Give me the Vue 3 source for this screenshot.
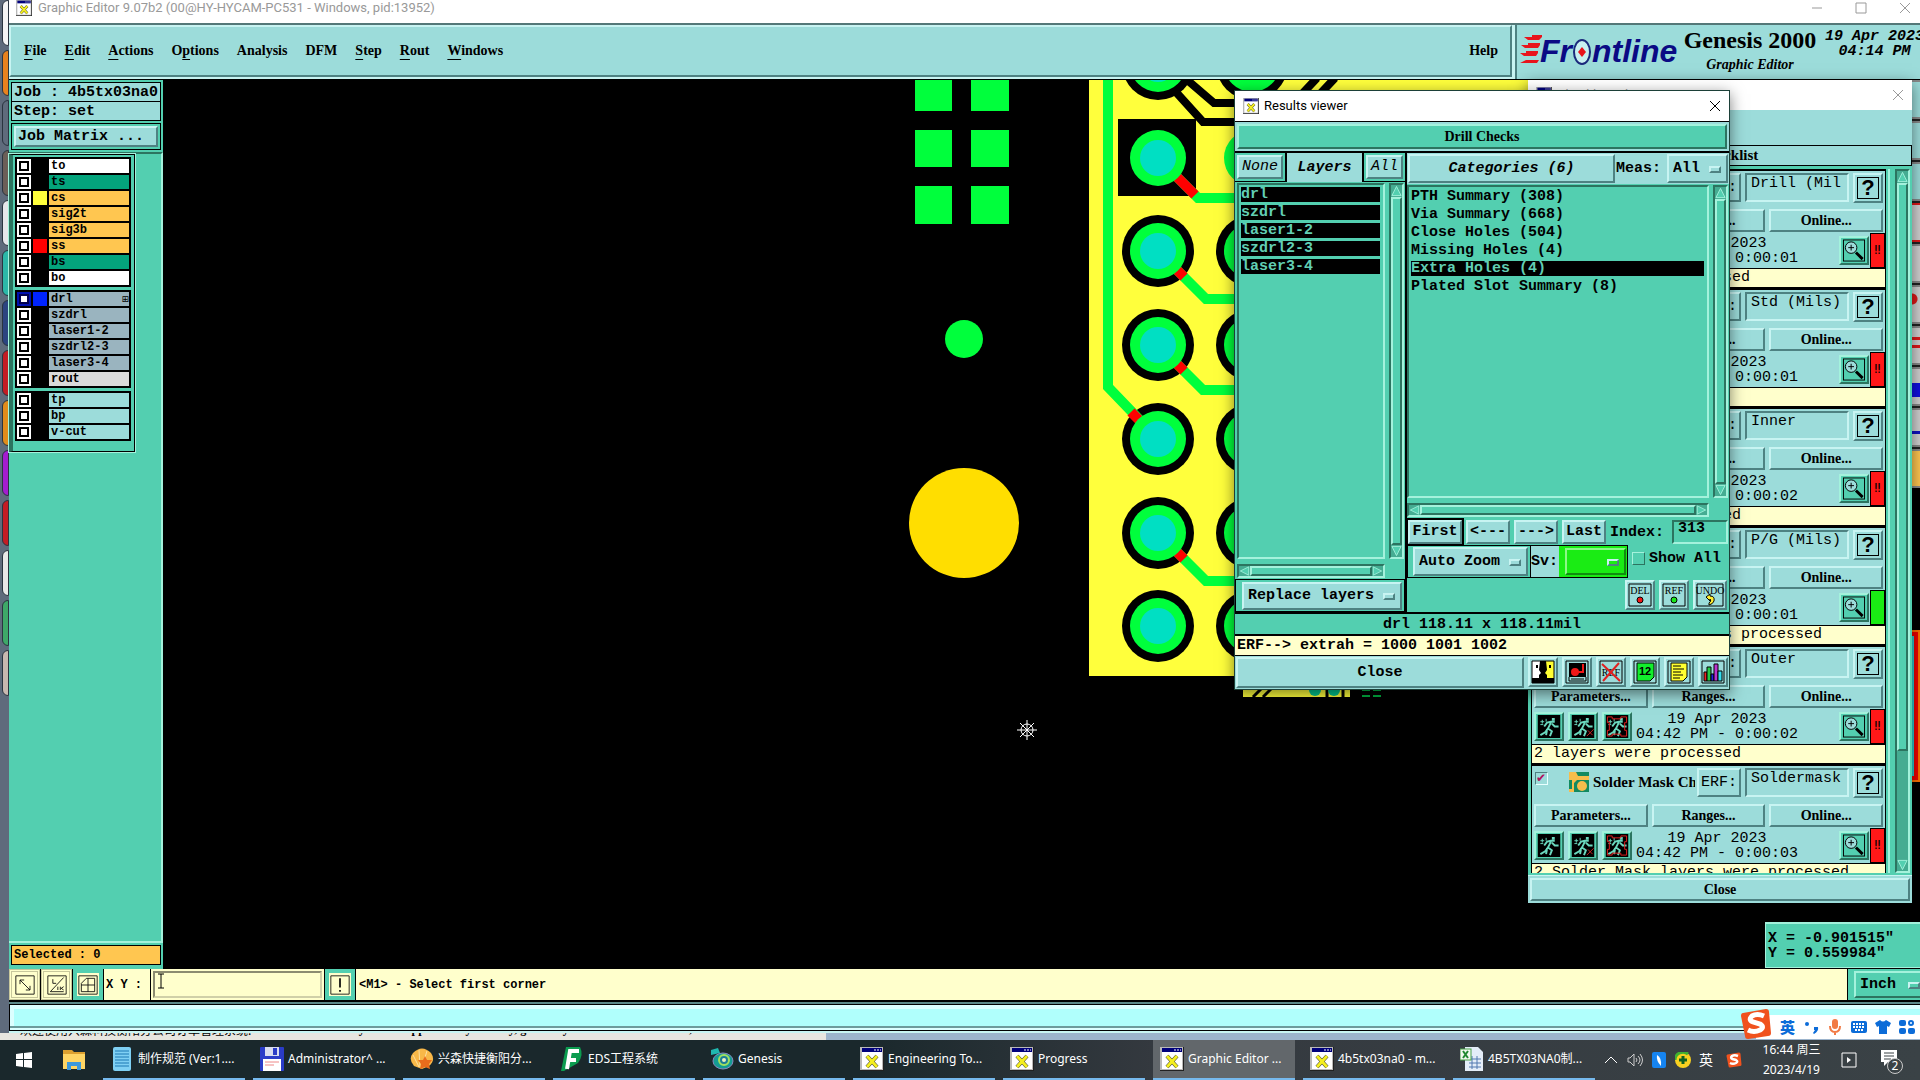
<template>
  <div class="desktop">
    <svg class="symbols" width="0" height="0" aria-hidden="true">
      <symbol id="xwin" viewBox="0 0 24 24">
        <rect width="24" height="24" fill="#222" />
        <path d="M0 0h23v23H0z" fill="#b8b8b8" />
        <rect x="2" y="2" width="20" height="20" fill="#fff" />
        <rect x="2" y="1" width="20" height="4" fill="#00007c" />
        <path d="M14 3h2M17 3h2M20 3h1" stroke="#fff" />
        <path d="M7 9l10 11M17 9L7 20" stroke="#333" stroke-width="4" />
        <path d="M7 9l10 11M17 9L7 20" stroke="#f4ee20" stroke-width="3" />
      </symbol>
      <symbol id="runner" viewBox="0 0 24 24">
        <rect width="24" height="24" fill="#000" />
        <path d="M15 3h3v3h-3z" fill="#6ad8be" />
        <path d="M18 7h-4l-4 1-3 4M14 8l-3 6 4 3-2 5M15 9l3 3h4M11 14l-3 4-5 3M10 15l-1 6" fill="none" stroke="#6ad8be" stroke-width="2" />
        <path d="M3 7h4M3 10h3M5 5v4M9 4v3" stroke="#6ad8be" />
      </symbol>
      <symbol id="sogou" viewBox="0 0 32 32">
        <path d="M3 5L26 1q3 0 3 3l2 21q0 3-3 3L8 31q-3 0-3-3L1 8q0-3 2-3z" fill="#f0521e" />
        <path d="M24 8q-7-3-12 0-4 4 1 6l7 2q5 3 0 6-6 3-12 0" fill="none" stroke="#fff" stroke-width="5" />
      </symbol>
      <symbol id="arrow-up" viewBox="0 0 12 12"><path d="M6 1l5 10H1z" /></symbol>
      <symbol id="arrow-down" viewBox="0 0 12 12"><path d="M6 11L1 1h10z" /></symbol>
      <symbol id="arrow-left" viewBox="0 0 12 12"><path d="M1 6l10-5v10z" /></symbol>
      <symbol id="arrow-right" viewBox="0 0 12 12"><path d="M11 6L1 1v10z" /></symbol>
    </svg>

    <div class="workspace">
      <!-- Programme hinter dem Editor -->
      <aside class="dock">
        <span v-for="(tile, i) in dockTiles" :key="i" class="dock-tile" :style="{ backgroundColor: tile }"></span>
      </aside>

      <main class="editor">
        <header class="titlebar">
          <svg class="win-icon"><use href="#xwin" /></svg>
          <h1>Graphic Editor 9.07b2 (00@HY-HYCAM-PC531 - Windows, pid:13952)</h1>
          <div class="win-buttons">
            <button aria-label="Minimize"><svg viewBox="0 0 12 12"><path d="M1 6h10" /></svg></button>
            <button aria-label="Maximize"><svg viewBox="0 0 12 12"><path d="M1 1h10v10H1z" /></svg></button>
            <button aria-label="Close editor"><svg viewBox="0 0 12 12"><path d="M1 1l10 10M11 1L1 11" /></svg></button>
          </div>
        </header>

        <div class="top-row">
          <nav class="menubar">
            <button v-for="m in menus" :key="m.join('')">{{ m[0] }}<u>{{ m[1] }}</u>{{ m[2] }}</button>
            <button class="help">Help</button>
          </nav>
          <div class="brand">
            <svg class="logo" viewBox="0 0 160 36" role="img" aria-label="Frontline">
              <path d="M4 6h18l-3 3H8zM1 14h19l-2 3H5zM0 22h18l-2 3H4zM0 32h17l2-3H6z" fill="#e8141c" />
              <path d="M12 4h10v2H12zM8 12h12v2H8zM6 20h12v2H6z" fill="#e8141c" />
              <text x="20" y="31">Fr</text>
              <text x="72" y="31">ntline</text>
              <ellipse cx="62" cy="21" rx="8" ry="12" fill="#c8f0f0" stroke="#1b2a7c" stroke-width="2" />
              <path d="M62 16l4 5-4 5-4-5z" fill="#e8141c" />
            </svg>
            <div class="product">
              <strong>Genesis 2000</strong>
              <em>Graphic Editor</em>
            </div>
            <div class="date">19 Apr 2023<br />04:14 PM</div>
          </div>
        </div>

        <div class="body">
          <section class="side">
            <div class="side-top">
              <p class="field-line">Job : 4b5tx03na0</p>
              <p class="field-line">Step: set</p>
              <div class="matrix-box"><button class="bevel">Job Matrix ...</button></div>
            </div>
            <div class="layer-area">
              <div class="layer-frame">
                <div v-for="(group, g) in layerGroups" :key="g" class="layer-group">
                  <label v-for="l in group" :key="l.name" class="layer">
                    <input type="checkbox" :class="{ work: l.name === 'drl' }" />
                    <span class="swatch" :style="{ backgroundColor: l.color || '#000' }"></span>
                    <span class="layer-name" :class="l.kind">{{ l.name }}<i v-if="l.name === 'drl'">⊞</i></span>
                  </label>
                </div>
              </div>
            </div>
            <p class="selected">Selected : 0</p>
          </section>

          <section class="canvas">
            <svg class="board" width="1757" height="889" viewBox="0 1 1757 889">
              <g fill="#00ff3c">
                <rect v-for="s in squares" :key="s.join()" :x="s[0]" :y="s[1]" :width="s[2]" :height="s[3]" />
                <circle cx="801" cy="260" r="19" />
              </g>
              <circle cx="801" cy="444" r="55" fill="#ffde00" />
              <rect x="926" y="0" width="500" height="597" fill="#ffff3c" />
              <rect x="955" y="40" width="78" height="77" />
              <g fill="none" stroke="#000" stroke-width="8">
                <path d="M1012 12l28 31h60M1023 0l28 24h40" />
                <path d="M1138 16l16-17M1156 16l16-17" />
              </g>
              <template v-for="y in padRows" :key="y">
                <circle v-if="y !== 79" cx="995" :cy="y" r="36" />
                <circle v-if="y !== 79" cx="1089" :cy="y" r="36" />
                <circle cx="1089" :cy="y" r="28" fill="#00ff3c" />
              </template>
              <g fill="none" stroke="#00ff3c" stroke-width="10">
                <path d="M945 0v308l50 52" />
                <path d="M995 79l40 40h60" />
                <path d="M995 172l48 48h60" />
                <path d="M995 266l45 45h60" />
                <path d="M995 454l48 48h60" />
              </g>
              <g stroke="#f00" stroke-width="10">
                <path d="M1012 96l20 20M1014 191l7 7M1014 285l7 7M1014 473l7 7M968 333l8 8" />
              </g>
              <template v-for="y in padRows" :key="'h' + y">
                <circle cx="995" :cy="y" r="28" fill="#00ff3c" />
                <circle cx="995" :cy="y" r="18" fill="#00dfc3" />
              </template>
              <rect x="1080" y="606" width="107" height="12" fill="#ffff3c" />
              <path d="M1090 618l14-14M1100 618l14-14" stroke="#000" stroke-width="3" />
              <path d="M1164 606v12M1180 606v12" stroke="#000" stroke-width="3" />
              <circle cx="1152" cy="611" r="6" fill="#00c890" />
              <circle cx="1171" cy="611" r="6" fill="#00c890" />
              <path d="M1199 611h8M1210 611h8M1199 617h8M1210 617h8" stroke="#00b040" stroke-width="2" />
              <g stroke="#fff" fill="none">
                <circle cx="864" cy="651" r="6" />
                <path d="M854 651h20M864 641v20M857 644l14 14M871 644l-14 14" />
              </g>
            </svg>
            <div class="coords">
              <output>X = -0.901515"</output>
              <output>Y = 0.559984"</output>
            </div>
            <div class="tool-strip">
              <span v-for="(t, i) in tools" :key="i" :class="t"></span>
            </div>
            <span class="red-part"></span>
          </section>
        </div>

        <footer class="command">
          <button class="cmd" aria-label="Snap"><svg viewBox="0 0 24 24"><path d="M1 1h22v22H1zM6 6l12 12M6 11V6h5M18 13v5h-5" /></svg></button>
          <button class="cmd" aria-label="Angle"><svg viewBox="0 0 24 24"><path d="M1 1h22v22H1zM4 20L20 3M4 20h16M7 5v5h4M13 14v4M16 14v4M20 14l-3 2 3 2" /></svg></button>
          <button class="cmd on" aria-label="Grid"><svg viewBox="0 0 24 24"><path d="M1 1h22v22H1zM4 10l6-6h10v16H4zM12 4v16M4 12h16" /></svg></button>
          <label class="xy" for="xy">X Y :</label>
          <div class="xy-box"><input id="xy" type="text" /><svg viewBox="0 0 8 16"><path d="M1 1h6M4 1v14M1 15h6" /></svg></div>
          <button class="cmd on" aria-label="Alert"><svg viewBox="0 0 24 24"><path d="M1 1h22v22H1z" /><path d="M12 4v11M12 18v2" stroke-width="2" /></svg></button>
          <p class="hint">&lt;M1&gt; - Select first corner</p>
          <div class="unit">
            <label class="option green"><select aria-label="Units"><option>Inch</option></select><i></i></label>
          </div>
        </footer>
        <div class="message-bar"><div></div></div>
      </main>
    </div>

    <div class="underlay">
      <span>欢迎使用兴森科技衡阳分公司订单管理系统.</span>
      <span class="quote">Don't let your unhappiness of yesterday, give the your dream of tomorrow, and it all</span>
    </div>

    <!-- Checkliste -->
    <section class="window checklist">
      <header class="win-title dim">
        <svg class="win-icon"><use href="#xwin" /></svg>
        <h2>Checklist Editor</h2>
        <button aria-label="Close checklist"><svg viewBox="0 0 12 12"><path d="M1 1l10 10M11 1L1 11" /></svg></button>
      </header>
      <div class="check-menu"></div>
      <p class="check-name">hy-checklist</p>
      <div class="check-main">
        <div class="check-list">
          <article v-for="c in checks" :key="c.erf" class="check">
            <div class="check-head">
              <input type="checkbox" checked :aria-label="c.name" />
              <svg class="check-icon" viewBox="0 0 20 20">
                <rect width="20" height="20" fill="#138a60" />
                <path d="M0 0h7l2 4h11v4H8l-3 3v9H0v-3h3V8H0z" fill="#f6bd4c" />
                <circle cx="13" cy="14" r="5" fill="#f6bd4c" />
              </svg>
              <h3>{{ c.name }}</h3>
              <button class="bevel erf">ERF:</button>
              <input type="text" :value="c.erf" aria-label="ERF" />
              <button class="bevel ask" aria-label="Explain"><b>?</b></button>
            </div>
            <div class="check-buttons">
              <button class="bevel">Parameters...</button>
              <button class="bevel">Ranges...</button>
              <button class="bevel">Online...</button>
            </div>
            <div class="check-run">
              <button class="bevel run" aria-label="Run"><svg viewBox="0 0 24 24"><use href="#runner" /></svg></button>
              <button class="bevel run" aria-label="Run area"><svg viewBox="0 0 24 24"><use href="#runner" /><path d="M16 22l7-7M17 16l5 5" stroke="#c22" /></svg></button>
              <button class="bevel run" aria-label="Run profile"><svg viewBox="0 0 24 24"><use href="#runner" /><path d="M2 2h5v2h9V2h6v6h-2v8h2v6h-6v-2H7v2H2v-6h2V8H2z" fill="none" stroke="#e02020" /></svg></button>
              <p class="stamp">19 Apr 2023<br />04:42 PM - {{ c.time }}</p>
              <button class="bevel run look" aria-label="Results">
                <svg viewBox="0 0 24 24"><rect x="1" y="1" width="22" height="22" fill="#53cfb0" stroke="#000" /><circle cx="9" cy="9" r="6" fill="#9cdcda" stroke="#000" /><path d="M9 6v6M6 9h6" stroke="#000" /><path d="M14 14l7 7" stroke="#000" stroke-width="3" /></svg>
              </button>
              <span class="flag" :class="{ ok: c.ok }">{{ c.ok ? '' : '‼' }}</span>
            </div>
            <p class="check-status">{{ c.status }}</p>
          </article>
        </div>
        <div class="vscroll">
          <button class="arrow" aria-label="Up"><svg><use href="#arrow-up" /></svg></button>
          <span class="thumb part"></span>
          <button class="arrow" aria-label="Down"><svg><use href="#arrow-down" /></svg></button>
        </div>
      </div>
      <div class="check-close"><button class="bevel">Close</button></div>
    </section>

    <!-- Ergebnisse -->
    <section class="window results">
      <header class="win-title">
        <svg class="win-icon"><use href="#xwin" /></svg>
        <h2>Results viewer</h2>
        <button aria-label="Close results"><svg viewBox="0 0 12 12"><path d="M1 1l10 10M11 1L1 11" /></svg></button>
      </header>
      <div class="banner"><p class="bevel green">Drill Checks</p></div>
      <div class="panes">
        <div class="pane-left">
          <div class="layer-head">
            <div class="cell"><button class="bevel">None</button></div>
            <strong>Layers</strong>
            <div class="cell"><button class="bevel">All</button></div>
          </div>
          <div class="list-grid">
            <ul class="list">
              <li v-for="n in resultLayers" :key="n" class="active">{{ n }}</li>
            </ul>
            <div class="vscroll">
              <button class="arrow" aria-label="Up"><svg><use href="#arrow-up" /></svg></button>
              <span class="thumb"></span>
              <button class="arrow" aria-label="Down"><svg><use href="#arrow-down" /></svg></button>
            </div>
            <div class="hscroll">
              <button class="arrow" aria-label="Left"><svg><use href="#arrow-left" /></svg></button>
              <span class="thumb"></span>
              <button class="arrow" aria-label="Right"><svg><use href="#arrow-right" /></svg></button>
            </div>
          </div>
          <div class="replace">
            <label class="option"><select aria-label="Layer mode"><option>Replace layers</option></select><i></i></label>
          </div>
        </div>
        <div class="pane-right">
          <div class="cat-head">
            <button class="bevel">Categories (6)</button>
            <span>Meas:</span>
            <label class="option"><select aria-label="Measurement"><option>All</option></select><i></i></label>
          </div>
          <div class="list-grid">
            <ul class="list">
              <li v-for="n in categories" :key="n" :class="{ active: n === currentCategory }" @click="currentCategory = n">{{ n }}</li>
            </ul>
            <div class="vscroll">
              <button class="arrow" aria-label="Up"><svg><use href="#arrow-up" /></svg></button>
              <span class="thumb"></span>
              <button class="arrow" aria-label="Down"><svg><use href="#arrow-down" /></svg></button>
            </div>
            <div class="hscroll">
              <button class="arrow" aria-label="Left"><svg><use href="#arrow-left" /></svg></button>
              <span class="thumb"></span>
              <button class="arrow" aria-label="Right"><svg><use href="#arrow-right" /></svg></button>
            </div>
          </div>
          <div class="steps">
            <button class="bevel default">First</button>
            <button class="bevel">&lt;---</button>
            <button class="bevel">---&gt;</button>
            <button class="bevel">Last</button>
            <label for="index">Index:</label>
            <input id="index" type="text" value="313" />
          </div>
          <div class="zoom-row">
            <div class="zoom-box"><label class="option"><select aria-label="Zoom mode"><option>Auto Zoom</option></select><i></i></label></div>
            <div class="sv"><label for="sv">Sv:</label><span class="option lime"><select id="sv"><option></option></select><i></i></span></div>
            <label class="show-all"><input type="checkbox" />Show All</label>
          </div>
          <div class="edit-row">
            <button class="bevel icon" aria-label="Delete"><svg viewBox="0 0 24 24"><path class="box" d="M1 1h22v22H1z" /><text x="12" y="11">DEL</text><circle cx="12" cy="17" r="3" fill="#f01818" stroke="#000" /></svg></button>
            <button class="bevel icon" aria-label="Reference"><svg viewBox="0 0 24 24"><path class="box" d="M1 1h22v22H1z" /><text x="12" y="11">REF</text><circle cx="12" cy="17" r="3" fill="#1ae61a" stroke="#000" /></svg></button>
            <button class="bevel icon wide" aria-label="Undo"><svg viewBox="0 0 28 24"><path class="box" d="M1 1h26v22H1z" /><text x="14" y="11">UNDO</text><path d="M10 14l4-3v2q5 0 4 5-1 3-5 4v-2q3-2 1-4v2z" fill="#ffee30" stroke="#000" /></svg></button>
          </div>
        </div>
      </div>
      <p class="measure">drl 118.11 x 118.11mil</p>
      <p class="erf-line">ERF--&gt; extrah = 1000 1001 1002</p>
      <div class="result-close">
        <button class="bevel close">Close</button>
        <button class="bevel icon" aria-label="Compare"><svg viewBox="0 0 24 24"><path fill="#fff" d="M1 1h11v22H1z" /><path fill="#ff3" d="M12 1h11v22H12z" /><path d="M1 18h7v-3l2-2-2-3 1-9h6l1 9-2 3 2 2v3h7v5H1zM5 5h2v3H5zM18 5h2v3h-2z" /><path class="box" d="M1 1h22v22H1z" /></svg></button>
        <button class="bevel icon" aria-label="Snapshot"><svg viewBox="0 0 24 24"><path class="box" d="M1 1h22v22H1z" /><path d="M4 3h17v14H4z" /><circle cx="10" cy="12" r="4" fill="#f01818" /><path d="M10 12h8V4" fill="none" stroke="#f01818" stroke-width="2" /><path fill="none" stroke="#000" d="M4 17v4h17v-4M6 19h13" /></svg></button>
        <button class="bevel icon" aria-label="Clear reference"><svg viewBox="0 0 24 24"><path class="box" d="M1 1h22v22H1z" /><text x="12" y="16">REF</text><path d="M3 4l18 17M20 3L4 21" stroke="#e02020" stroke-width="2" /></svg></button>
        <button class="bevel icon" aria-label="Numbers"><svg viewBox="0 0 24 24"><path class="box" d="M1 1h22v22H1z" /><path d="M4 3h17v14l-4 4H4z" fill="#12ee2c" stroke="#000" /><text class="num" x="12" y="15">12</text></svg></button>
        <button class="bevel icon" aria-label="Report"><svg viewBox="0 0 24 24"><path class="box" d="M1 1h22v22H1z" /><path d="M4 3h16v14l-4 4H4z" fill="#ffff30" stroke="#000" /><path d="M6 6h8M6 9h11M6 12h8M6 15h10M6 18h7" stroke="#000" /></svg></button>
        <button class="bevel icon" aria-label="Histogram"><svg viewBox="0 0 24 24"><path class="box" d="M1 1h22v22H1z" /><g stroke="#000"><path fill="#e22" d="M3 12h3v9H3z" /><path fill="#2c4" d="M6 7h4v14H6z" /><path fill="#22d" d="M10 14h3v7h-3z" /><path fill="#b3c" d="M13 4h4v17h-4z" /><path fill="#3de" d="M17 11h4v10h-4z" /></g></svg></button>
      </div>
    </section>

    <!-- Eingabeleiste -->
    <div class="ime">
      <svg class="ime-logo"><use href="#sogou" /></svg>
      <b>英</b>
      <svg viewBox="0 0 16 16"><circle cx="4" cy="5" r="2" /><path d="M11 8h4q1 4-4 7l-1-1 2-3h-1z" /></svg>
      <svg class="mic" viewBox="0 0 16 16"><rect x="5" y="0" width="6" height="10" rx="3" /><path d="M3 7q0 6 5 6t5-6M8 13v3" fill="none" stroke="#f27a44" stroke-width="2" /></svg>
      <svg viewBox="0 0 16 16"><rect y="2" width="16" height="12" rx="2" /><path d="M2 5h12M2 8h12M4 11h8" stroke="#fff" stroke-width="2" stroke-dasharray="2 1" /></svg>
      <svg viewBox="0 0 16 16"><path d="M5 1q3 3 6 0l5 3-2 4-2-1v8H4V7L2 8 0 4z" /></svg>
      <svg viewBox="0 0 16 16"><rect y="1" width="7" height="6" rx="2" /><circle cx="12" cy="4" r="2" fill="none" stroke="#0c6cd8" stroke-width="2" /><rect y="9" width="7" height="6" rx="2" /><rect x="9" y="9" width="7" height="6" rx="2" /></svg>
    </div>

    <footer class="taskbar">
      <button class="start" aria-label="Start"><svg viewBox="0 0 16 16"><path d="M0 2l7-1v6H0zM8 1l8-1v7H8zM0 8h7v7l-7-1zM8 8h8v8l-8-1z" fill="#fff" /></svg></button>
      <button class="folder" aria-label="Explorer"><svg viewBox="0 0 24 24"><path d="M1 2h9l2 2h11v17H1z" fill="#dca030" /><path d="M1 6h22v15H1z" fill="#ffd564" /><path d="M5 22v-8h14v8h-4v-4H9v4z" fill="#3c98dc" /></svg></button>
      <div class="tasks">
        <button v-for="t in tasks" :key="t.label" class="task" :class="{ current: t.current }">
          <svg v-if="t.icon === 'x'" viewBox="0 0 24 24"><use href="#xwin" /></svg>
          <svg v-else-if="t.icon === 'note'" viewBox="0 0 24 24"><rect x="3" width="18" height="24" rx="2" fill="#7fd0f4" /><path d="M5 4h14M5 7h14M5 10h14M5 13h14M5 16h14M5 19h14" stroke="#1c78b4" /></svg>
          <svg v-else-if="t.icon === 'disk'" viewBox="0 0 24 24"><rect width="24" height="24" rx="1" fill="#2a3cc8" /><path d="M5 0h14v9H5z" fill="#d8dcf0" /><path d="M13 1h4v7h-4z" fill="#2a3cc8" /><path d="M3 12h18v12H3z" fill="#fff" /><path d="M5 15h14M5 18h9" stroke="#e88" /></svg>
          <svg v-else-if="t.icon === 'shell'" viewBox="0 0 24 24"><path d="M4 19Q-2 12 3 6 12-3 21 6q5 7-2 13l-7 3z" fill="#f8b848" /><path d="M9 20L3 8M10 20L9 3M12 20l5-16" stroke="#fde0a0" /><path d="M15 9l2 4 5 0-3 4 1 5-5-2-5 2 1-5-3-4 5 0z" fill="#e86c1c" /></svg>
          <svg v-else-if="t.icon === 'eds'" viewBox="0 0 24 24"><path d="M6 0h14q4 8-2 16L4 24H1z" fill="#0c9c50" /><path d="M7 22L10 4h9M8 13h8" fill="none" stroke="#fff" stroke-width="4" /></svg>
          <svg v-else-if="t.icon === 'gen'" viewBox="0 0 24 24"><path d="M1 3l7-2 2 5-9 2z" fill="#20b8b0" /><ellipse cx="13" cy="14" rx="10" ry="8" fill="#149c94" stroke="#8a8ac0" /><circle cx="14" cy="13" r="5" fill="#1c7c98" stroke="#a0e060" stroke-width="2" /><circle cx="14" cy="13" r="2" fill="#e8f0c0" /></svg>
          <svg v-else viewBox="0 0 24 24"><path d="M5 0h13l5 5v19H5z" fill="#e4edf8" /><path d="M9 12h12M9 16h12M9 20h12M12 9v13M17 9v13" stroke="#5078b0" /><rect y="2" width="11" height="11" fill="#f0f8ee" stroke="#48a048" /><path d="M3 4l5 7M8 4l-5 7" stroke="#208830" stroke-width="2" /></svg>
          <span>{{ t.label }}</span>
        </button>
      </div>
      <div class="tray">
        <svg viewBox="0 0 16 16"><path d="M2 11l6-6 6 6" fill="none" stroke="#fff" /></svg>
        <svg viewBox="0 0 16 16"><path d="M1 6h2l4-4v12l-4-4H1zM9 6q2 2 0 4M11 4q4 4 0 8M13 2q5 6 0 12" fill="none" stroke="#ccc" /></svg>
        <svg viewBox="0 0 16 16"><rect x="1" width="14" height="16" rx="2" fill="#1684f0" /><path d="M6 3q5 3 4 11Q5 9 6 3z" fill="#fff" /></svg>
        <svg viewBox="0 0 16 16"><circle cx="8" cy="8" r="8" fill="#f8d020" /><path d="M0 8a8 8 0 0 1 13-6" fill="none" stroke="#40b030" stroke-width="3" /><path d="M8 4v8M4 8h8" stroke="#106020" stroke-width="3" /></svg>
        <span>英</span>
        <svg class="sogou"><use href="#sogou" /></svg>
        <time>16:44 周三<br />2023/4/19</time>
        <svg viewBox="0 0 16 16"><path d="M1 1h14v14H1z" fill="none" stroke="#fff" /><path d="M6 5l4 3-4 3z" fill="#fff" /></svg>
        <div class="notify">
          <svg viewBox="0 0 16 16"><path d="M0 0h16v12H7l-4 4v-4H0z" fill="#fff" /><path d="M3 3h10M3 6h10M3 9h7" stroke="#3a4246" /></svg>
          <b>2</b>
        </div>
      </div>
    </footer>
  </div>
</template>

<script setup>
import { ref } from 'vue';

// Text vor, auf und nach dem unterstrichenen Buchstaben
const menus = [
  ['', 'F', 'ile'],
  ['', 'E', 'dit'],
  ['', 'A', 'ctions'],
  ['O', 'p', 'tions'],
  ['Analysis', '', ''],
  ['DFM', '', ''],
  ['', 'S', 'tep'],
  ['', 'R', 'out'],
  ['', 'W', 'indows'],
];

const layerGroups = [
  [
    { name: 'to', kind: 'silk' },
    { name: 'ts', kind: 'mask' },
    { name: 'cs', kind: 'signal', color: '#ffff3c' },
    { name: 'sig2t', kind: 'signal' },
    { name: 'sig3b', kind: 'signal' },
    { name: 'ss', kind: 'signal', color: '#ff0000' },
    { name: 'bs', kind: 'mask' },
    { name: 'bo', kind: 'silk' },
  ],
  [
    { name: 'drl', kind: 'drill', color: '#0024ff' },
    { name: 'szdrl', kind: 'drill' },
    { name: 'laser1-2', kind: 'drill' },
    { name: 'szdrl2-3', kind: 'drill' },
    { name: 'laser3-4', kind: 'drill' },
    { name: 'rout', kind: 'rout' },
  ],
  [
    { name: 'tp', kind: 'misc' },
    { name: 'bp', kind: 'misc' },
    { name: 'v-cut', kind: 'misc' },
  ],
];

// x, y, Breite, Höhe
const squares = [
  [752, 0, 37, 32], [808, 0, 38, 32],
  [752, 51, 37, 37], [808, 51, 38, 37],
  [752, 107, 37, 38], [808, 107, 38, 38],
];
const padRows = [-15, 79, 172, 266, 360, 454, 547];

const dockTiles = ['#f4f4f4', '#e8821e', '#5f6b7c', '#6b5f58', '#e6e6ea', '#2cb8a8', '#2c4480', '#c41c24', '#e08c1c', '#a41cd0', '#c41c24', '#e8e8e8', '#3ea868', '#c8b8b0'];
const tools = ['cyan', 'cyan', 'cyan', 'redline', 'dash', 'dot', 'bars', 'blue', 'cross', 'pick'];

const resultLayers = ['drl', 'szdrl', 'laser1-2', 'szdrl2-3', 'laser3-4'];
const categories = ['PTH Summary (308)', 'Via Summary (668)', 'Close Holes (504)', 'Missing Holes (4)', 'Extra Holes (4)', 'Plated Slot Summary (8)'];
const currentCategory = ref('Extra Holes (4)');

const checks = [
  { name: 'Drill Checks', erf: 'Drill (Mil', time: '0:00:01', status: '10 layers were processed' },
  { name: 'Drill Checks', erf: 'Std (Mils)', time: '0:00:01', status: '' },
  { name: 'Signal Layer Checks', erf: 'Inner', time: '0:00:02', status: '2 layers were processed' },
  { name: 'P/G Checks', erf: 'P/G (Mils)', time: '0:00:01', status: 'No power/ground layers processed', ok: true },
  { name: 'Signal Layer Checks', erf: 'Outer', time: '0:00:02', status: '2 layers were processed' },
  { name: 'Solder Mask Checks', erf: 'Soldermask', time: '0:00:03', status: '2 Solder Mask layers were processed' },
];

const tasks = [
  { icon: 'note', label: '制作规范 (Ver:1....' },
  { icon: 'disk', label: 'Administrator^ ...' },
  { icon: 'shell', label: '兴森快捷衡阳分...' },
  { icon: 'eds', label: 'EDS工程系统' },
  { icon: 'gen', label: 'Genesis' },
  { icon: 'x', label: 'Engineering To...' },
  { icon: 'x', label: 'Progress' },
  { icon: 'x', label: 'Graphic Editor ...', current: true },
  { icon: 'x', label: '4b5tx03na0 - m...' },
  { icon: 'sheet', label: '4B5TX03NA0制...' },
];
</script>

<style>
body {
  margin: 0;
  background: #000;
}
</style>

<style scoped>
* {
  box-sizing: border-box;
}

.desktop {
  --cyan: #9cdcda;
  --cyan-hi: #c8f4f2;
  --cyan-lo: #4e8282;
  --green: #53cfb0;
  --green-hi: #a4f2dc;
  --green-lo: #2c7460;
  --cream: #ffffcc;
  position: relative;
  display: flex;
  flex-direction: column;
  height: 100vh;
  overflow: hidden;
  color: #000;
  font: bold 15px/18px "Liberation Mono", monospace;
}

.symbols {
  position: absolute;
}

p, h1, h2, h3, ul {
  margin: 0;
  padding: 0;
  font: inherit;
  white-space: pre;
}

button, select, input {
  margin: 0;
  padding: 0;
  border: 0;
  border-radius: 0;
  background: none;
  color: inherit;
  font: inherit;
  appearance: none;
  white-space: nowrap;
}

.bevel {
  background: var(--cyan);
  border: 2px solid;
  border-color: var(--cyan-hi) var(--cyan-lo) var(--cyan-lo) var(--cyan-hi);
}

.bevel.green {
  background: var(--green);
  border-color: var(--green-hi) var(--green-lo) var(--green-lo) var(--green-hi);
}

/* Option-Menü mit kleinem Balken rechts */
.option {
  position: relative;
  display: block;
  background: var(--cyan);
  border: 2px solid;
  border-color: var(--cyan-hi) var(--cyan-lo) var(--cyan-lo) var(--cyan-hi);
}

.option select {
  display: block;
  width: 100%;
  height: 100%;
  padding: 0 4px;
}

.option i {
  position: absolute;
  right: 5px;
  top: calc(50% - 3px);
  width: 12px;
  height: 7px;
  border: 2px solid;
  border-color: var(--cyan-hi) var(--cyan-lo) var(--cyan-lo) var(--cyan-hi);
  pointer-events: none;
}

.option.green {
  background: var(--green);
  border-color: var(--green-hi) var(--green-lo) var(--green-lo) var(--green-hi);
}

.option.lime {
  background: #1aec14;
  border-color: #8cf888 #108c10 #108c10 #8cf888;
}

.workspace {
  flex: 1;
  min-height: 0;
  display: flex;
}

.dock {
  width: 9px;
  display: flex;
  flex-direction: column;
  gap: 4px;
  overflow: hidden;
  background: #5f6b7c;
}

.dock-tile {
  flex: none;
  height: 46px;
  margin-left: 2px;
  border: 1px solid #2a3440;
  border-radius: 6px 0 0 6px;
}

.editor {
  flex: 1;
  min-width: 0;
  display: flex;
  flex-direction: column;
  background: #000;
}

.titlebar {
  height: 23px;
  padding: 0 9px 7px 7px;
  display: flex;
  align-items: center;
  gap: 6px;
  background: #fff;
  color: #999;
  font: 13px/16px Roboto, sans-serif;
}

.win-icon {
  flex: none;
  width: 16px;
  height: 16px;
}

.win-buttons {
  margin-left: auto;
  display: flex;
  gap: 32px;
}

.win-buttons svg, .win-title button svg {
  display: block;
  width: 12px;
  height: 12px;
  fill: none;
  stroke: currentColor;
}

.top-row {
  display: flex;
  height: 57px;
  border-top: 2px solid #547878;
  border-bottom: 1px solid #000;
  background: var(--cyan-hi);
}

.menubar {
  flex: 1;
  display: flex;
  align-items: center;
  gap: 18px;
  margin: 0 3px 2px 0;
  padding: 0 12px 0 13px;
  background: var(--cyan);
  border: 2px solid;
  border-color: var(--cyan-hi) var(--cyan-lo) var(--cyan-lo) var(--cyan-hi);
  font: bold 14px/18px "Liberation Serif", serif;
}

.menubar u {
  text-underline-offset: 4px;
}

.help {
  margin-left: auto;
}

.brand {
  width: 405px;
  padding-left: 3px;
  display: flex;
  overflow: hidden;
  background: var(--cyan);
  border-left: 2px solid var(--cyan-lo);
}

.logo {
  flex: none;
  width: 160px;
  height: 36px;
  margin-top: 6px;
}

.logo text {
  font: italic bold 32px "Liberation Sans", sans-serif;
  fill: #0a0a84;
}

.product {
  margin: 3px 0 0 1px;
  width: 138px;
  flex: none;
  text-align: center;
}

.product strong, .product em {
  display: block;
  font: bold 24px/24px "Liberation Serif", serif;
  white-space: nowrap;
}

.product em {
  font: italic bold 14px/18px "Liberation Serif", serif;
  padding-top: 4px;
}

.date {
  margin-top: 4px;
  padding-left: 6px;
  flex: none;
  width: 105px;
  font-style: italic;
  line-height: 15px;
  text-align: center;
  white-space: nowrap;
}

.body {
  flex: 1;
  min-height: 0;
  display: flex;
}

.side {
  width: 154px;
  display: flex;
  flex-direction: column;
  padding: 2px 0 4px;
  background: var(--green);
}

.side-top {
  padding: 0 2px 2px;
}

.field-line {
  height: 20px;
  margin-bottom: -1px;
  padding-left: 2px;
  border: 1px solid #000;
  background: var(--cyan);
  line-height: 19px;
}

.matrix-box {
  height: 27px;
  margin-top: 3px;
  padding: 2px;
  border: 1px solid #000;
}

.matrix-box button {
  width: 100%;
  height: 21px;
  padding-left: 2px;
  text-align: left;
  line-height: 16px;
}

.layer-area {
  flex: 1;
  border-top: 2px solid var(--green-lo);
  border-right: 2px solid var(--green-hi);
  border-bottom: 2px solid var(--green-hi);
}

.layer-frame {
  width: 126px;
  padding: 2px 3px 7px 2px;
  border: 1px solid #000;
  border-left: 4px solid var(--green-lo);
  outline: 1px solid var(--green-hi);
}

.layer-group {
  display: grid;
  gap: 2px;
  margin-bottom: 3px;
  padding: 2px;
  background: #000;
}

.layer {
  display: grid;
  grid-template-columns: 14px 14px 1fr;
  gap: 2px;
  height: 14px;
  font-size: 12px;
  line-height: 14px;
}

.layer input {
  width: 14px;
  height: 14px;
  background: #fff;
  box-shadow: inset 0 0 0 2px #fff, inset 0 0 0 4px #000;
}

.layer input.work {
  box-shadow: inset 0 0 0 2px #0010b0, inset 0 0 0 4px #000050;
}

.layer-name {
  padding-left: 2px;
  display: flex;
  justify-content: space-between;
}

.layer-name i {
  font: 9px/14px "DejaVu Sans", sans-serif;
}

.silk { background: #fff; }
.mask { background: #04a47c; }
.signal { background: #ffc650; }
.drill { background: #9ab4bf; }
.rout { background: #dadada; }
.misc { background: var(--cyan); }

.selected {
  height: 20px;
  margin: 2px 2px 0;
  padding-left: 2px;
  border: 1px solid #000;
  background: #ffc650;
  font-size: 12px;
  line-height: 18px;
}

.canvas {
  position: relative;
  flex: 1;
  min-width: 0;
  overflow: hidden;
  background: #000;
}

.board {
  position: absolute;
  left: 0;
  top: 0;
}

.coords {
  position: absolute;
  right: 0;
  bottom: 1px;
  width: 155px;
  height: 46px;
  padding: 7px 0 0 2px;
  background: var(--green);
  border: solid var(--green-hi);
  border-width: 2px 0 1px 1px;
  line-height: 15px;
}

.coords output {
  display: block;
}

.tool-strip {
  position: absolute;
  right: 0;
  top: 0;
  width: 10px;
  display: grid;
  gap: 2px;
  background: #222;
}

.tool-strip span {
  height: 39px;
  border: solid #888;
  border-width: 2px 0;
  background: #d0d0d0;
}

.tool-strip .cyan { background: var(--cyan); }
.tool-strip .redline { border-color: #e01818; }
.tool-strip .dot { background: radial-gradient(circle at 2px 12px, #e01818 5px, #d0d0d0 6px); }
.tool-strip .bars { background: linear-gradient(#d0d0d0 25%, #e01818 25% 33%, #d0d0d0 33% 50%, #e01818 50% 58%, #d0d0d0 58%); }
.tool-strip .blue { background: linear-gradient(#d0d0d0 40%, #1010e0 40% 80%, #d0d0d0 80%); }
.tool-strip .cross { background: linear-gradient(#d0d0d0 60%, #1010c0 60% 70%, #d0d0d0 70%); }
.tool-strip .pick { background: #ffc650; }

.red-part {
  position: absolute;
  right: 0;
  top: 550px;
  width: 16px;
  height: 152px;
  background: #f00000;
  border: 2px solid #ff7000;
  box-shadow: inset 0 0 0 4px #f00000, inset 0 0 0 6px #30c8d0;
}

.command {
  display: flex;
  height: 33px;
  border-bottom: 2px solid #000;
  background: #000;
  gap: 1px;
  font-size: 12px;
}

.cmd {
  width: 31px;
  border: 3px double #c8c89c;
  background: var(--cream);
}

.cmd svg {
  display: block;
  width: 20px;
  height: 22px;
  margin: auto;
  fill: none;
  stroke: #000;
}

.cmd.on {
  width: 30px;
  border: 4px solid var(--green);
}

.xy {
  width: 46px;
  padding-left: 2px;
  background: var(--cream);
  line-height: 32px;
}

.xy-box {
  position: relative;
  width: 173px;
  padding: 2px;
  background: var(--cream);
}

.xy-box input {
  width: 100%;
  height: 27px;
  border: 2px solid;
  border-color: #8c8c70 #d0d0a8 #d0d0a8 #8c8c70;
}

.xy-box svg {
  position: absolute;
  left: 6px;
  top: 4px;
  width: 8px;
  height: 16px;
  fill: none;
  stroke: #000;
}

.hint {
  flex: 1;
  padding-left: 3px;
  background: var(--cream);
  line-height: 32px;
}

.unit {
  width: 72px;
  padding: 2px 0 2px 6px;
  background: var(--green);
  font-size: 15px;
}

.unit .option {
  height: 27px;
  border-right: 0;
}

.unit .option i {
  right: 0;
}

.message-bar {
  height: 31px;
  padding-bottom: 2px;
  background: var(--cyan-hi);
  border-top: 2px solid #5c8888;
}

.message-bar div {
  height: 27px;
  background: #b0fffc;
  border: 1px solid #000;
  border-right: 0;
  box-shadow: inset 0 -2px #dcffff, inset 0 -4px #6c9c9c, inset 4px 4px #dcffff;
}

.underlay {
  height: 7px;
  display: flex;
  align-items: flex-end;
  gap: 60px;
  padding: 0 0 4px 20px;
  overflow: hidden;
  background: linear-gradient(90deg, #e8e6e0 43%, #9cb4cc 43%);
  font: 12px/13px "Noto Sans CJK SC", sans-serif;
  white-space: nowrap;
}

.underlay .quote {
  font: bold 12px/13px "Liberation Serif", serif;
}

.window {
  position: absolute;
  display: flex;
  flex-direction: column;
  background: var(--green);
  box-shadow: 0 4px 14px rgba(0, 0, 0, 0.5);
}

.win-title {
  flex: none;
  height: 30px;
  padding: 0 8px;
  display: flex;
  align-items: center;
  gap: 5px;
  background: #fff;
  font: 13px/18px Roboto, sans-serif;
}

.win-title button {
  margin-left: auto;
}

.win-title.dim {
  color: #999;
}

.checklist {
  top: 80px;
  right: 8px;
  width: 384px;
  height: 823px;
}

.check-menu {
  height: 35px;
  background: var(--cyan);
}

.check-name {
  height: 21px;
  border: 1px solid #000;
  background: var(--cyan);
  text-align: center;
  font: bold 15px/18px "Liberation Serif", serif;
}

.check-main {
  flex: 1;
  min-height: 0;
  display: flex;
  gap: 5px;
  padding: 3px 2px 2px 3px;
}

.check-list {
  flex: 1;
  overflow: hidden;
  border-right: 2px solid var(--green-hi);
  padding-right: 2px;
}

.check {
  height: 119px;
  padding: 2px;
  border: 1px solid #000;
  border-top-width: 2px;
  background: var(--cyan);
  display: flex;
  flex-direction: column;
}

.check-head, .check-buttons, .check-run {
  flex: none;
}

.check-head {
  display: flex;
  height: 32px;
  gap: 4px;
}

.check-head input[type='checkbox'] {
  width: 13px;
  height: 13px;
  margin: 4px 17px 0 1px;
  border: 1px solid;
  border-color: var(--cyan-lo) #e8ffff #e8ffff var(--cyan-lo);
}

.check-head input:checked::after {
  content: '✔';
  display: block;
  color: #b0105c;
  font: 12px/11px "DejaVu Sans", sans-serif;
}

.check-icon {
  flex: none;
  width: 20px;
  height: 20px;
  margin-top: 4px;
}

.check-head h3 {
  flex: 1;
  min-width: 0;
  margin-right: -2px;
  overflow: hidden;
  font: bold 15px/28px "Liberation Serif", serif;
}

.erf {
  width: 44px;
  height: 29px;
  font-weight: normal;
}

.check-head input[type='text'] {
  width: 104px;
  height: 29px;
  padding: 0 0 8px 4px;
  border: 2px solid;
  border-color: var(--cyan-lo) var(--cyan-hi) var(--cyan-hi) var(--cyan-lo);
  font-weight: normal;
}

.ask {
  width: 30px;
  height: 30px;
  padding: 2px;
}

.ask b {
  display: block;
  border: 1px solid #000;
  font: bold 22px/20px "Liberation Sans", sans-serif;
}

.check-buttons {
  display: grid;
  grid-template-columns: repeat(3, 1fr);
  gap: 4px;
  padding: 4px 0 1px;
}

.check-buttons button, .check-close button {
  height: 23px;
  font: bold 14px/18px "Liberation Serif", serif;
}

.check-run {
  display: flex;
  align-items: center;
  gap: 4px;
  height: 35px;
}

.run {
  flex: none;
  width: 30px;
  height: 29px;
  padding: 1px;
  border-color: var(--green-hi) var(--green-lo) var(--green-lo) var(--green-hi);
  background: var(--green);
}

.run svg {
  display: block;
  width: 24px;
  height: 23px;
}

.stamp {
  flex: 1;
  margin-right: 37px;
  padding-top: 1px;
  font-weight: normal;
  line-height: 15px;
  text-align: center;
}

.flag {
  width: 16px;
  height: 35px;
  margin: 0 -2px 0 -3px;
  border: 1px solid #000;
  background: #ff1818;
  font: 13px/32px "DejaVu Sans", sans-serif;
  text-align: center;
}

.flag.ok {
  background: #1aec14;
}

.check-status {
  flex: none;
  height: 19px;
  margin: 0 -2px;
  padding-left: 2px;
  border-top: 1px solid #000;
  background: var(--cream);
  font-weight: normal;
  line-height: 18px;
}

.check-close {
  padding: 2px;
  background: var(--cyan);
  border-top: 1px solid var(--cyan-hi);
}

.check-close button {
  display: block;
  width: 100%;
}

.vscroll, .hscroll {
  display: flex;
  background: #45ac92;
  border: 2px solid;
  border-color: var(--green-lo) var(--green-hi) var(--green-hi) var(--green-lo);
}

.vscroll {
  width: 15px;
  flex-direction: column;
}

.hscroll {
  height: 14px;
}

.thumb {
  flex: 1;
  background: var(--green);
  border: 2px solid;
  border-color: var(--green-hi) var(--green-lo) var(--green-lo) var(--green-hi);
}

.thumb.part {
  flex: none;
  height: 568px;
  margin-bottom: auto;
}

.arrow {
  flex: none;
  width: 11px;
  height: 12px;
}

.hscroll .arrow {
  height: 10px;
}

.arrow svg {
  display: block;
  width: 100%;
  height: 100%;
  fill: #53cfb0;
  stroke: #a4f2dc;
}

.results {
  top: 90px;
  right: 190px;
  width: 496px;
  height: 600px;
  border: 1px solid #1c4038;
}

.banner {
  padding: 2px;
  background: var(--cyan);
  border-top: 1px solid #000;
  border-bottom: 2px solid #000;
}

.banner p {
  height: 25px;
  text-align: center;
  font: bold 14px/21px "Liberation Serif", serif;
}

.panes {
  flex: 1;
  min-height: 0;
  display: flex;
}

.pane-left {
  width: 172px;
  display: flex;
  flex-direction: column;
  border-right: 2px solid #000;
}

.layer-head {
  display: grid;
  grid-template-columns: 50px 1fr 41px;
  height: 29px;
  border-bottom: 1px solid #000;
  font-style: italic;
}

.layer-head strong {
  text-align: center;
  line-height: 29px;
  background: var(--cyan);
  border: solid #000;
  border-width: 0 2px;
}

.cell {
  padding: 2px;
}

.cell button {
  width: 100%;
  height: 24px;
  font-weight: normal;
}

.list-grid {
  flex: 1;
  min-height: 0;
  display: grid;
  grid-template-columns: 1fr 15px;
  grid-template-rows: 1fr 14px;
  gap: 5px 4px;
  padding: 1px 1px 1px 2px;
}

.pane-right .list-grid {
  padding: 1px 1px 3px 0;
}

.list {
  padding: 2px 3px 0 2px;
  list-style: none;
  border: 2px solid;
  border-color: var(--green-lo) var(--green-hi) var(--green-hi) var(--green-lo);
}

.list li {
  height: 15px;
  margin-bottom: 3px;
  line-height: 15px;
}

.list .active {
  background: #000;
  color: #62cfb4;
}

.replace {
  height: 33px;
  padding: 2px 2px 2px 6px;
  border: 1px solid #000;
}

.replace .option {
  height: 28px;
}

.pane-right {
  flex: 1;
  min-width: 0;
  display: flex;
  flex-direction: column;
}

.cat-head {
  display: flex;
  height: 31px;
  padding: 1px;
  background: var(--cyan);
}

.cat-head button {
  width: 207px;
  font-style: italic;
}

.cat-head span {
  flex: 1;
  padding-left: 1px;
  line-height: 29px;
}

.cat-head .option {
  width: 61px;
}

.steps {
  display: flex;
  gap: 4px;
  height: 24px;
  padding: 0 1px;
}

.steps button {
  width: 44px;
}

.steps .default {
  width: 54px;
  outline: 2px solid #000;
}

.steps label {
  width: 58px;
  line-height: 25px;
}

.steps input {
  flex: 1;
  width: 0;
  padding: 0 0 6px 4px;
  border: 2px solid;
  border-color: var(--green-lo) var(--green-hi) var(--green-hi) var(--green-lo);
}

.zoom-row {
  display: flex;
  height: 33px;
  margin-top: 1px;
}

.zoom-box {
  width: 124px;
  padding: 1px 2px 1px 5px;
  border: 1px solid #000;
}

.zoom-box .option {
  height: 29px;
}

.sv {
  display: flex;
  width: 97px;
  border: 1px solid #000;
  border-left: 0;
  background: #1aec14;
}

.sv label {
  width: 28px;
  background: var(--cyan);
  line-height: 31px;
}

.sv .option {
  flex: 1;
  margin: 2px 1px 2px 6px;
}

.show-all {
  display: flex;
  gap: 4px;
  padding: 5px 0 0 4px;
}

.show-all input {
  width: 13px;
  height: 13px;
  margin-top: 2px;
  border: 1px solid;
  border-color: var(--green-hi) var(--green-lo) var(--green-lo) var(--green-hi);
}

.edit-row {
  display: flex;
  justify-content: flex-end;
  gap: 4px;
  height: 34px;
  padding: 2px 2px 2px 0;
}

.icon {
  flex: none;
  width: 30px;
  height: 30px;
}

.icon.wide {
  width: 34px;
}

.icon svg {
  display: block;
  width: 100%;
  height: 24px;
}

.icon .box {
  fill: none;
  stroke: #000;
}

.icon text {
  font: 10px "Liberation Serif", serif;
  text-anchor: middle;
}

.icon .num {
  font: bold 11px "Liberation Sans", sans-serif;
}

.measure {
  height: 22px;
  border-top: 2px solid #000;
  text-align: center;
  line-height: 21px;
}

.erf-line {
  height: 22px;
  padding-left: 2px;
  border: solid #000;
  border-width: 2px 0 1px;
  background: var(--cream);
  line-height: 19px;
}

.result-close {
  display: flex;
  gap: 4px;
  height: 33px;
  padding: 1px;
  background: var(--cyan);
}

.result-close .close {
  flex: 1;
}

.ime {
  position: absolute;
  right: 0;
  bottom: 41px;
  display: flex;
  align-items: center;
  gap: 8px;
  height: 24px;
  padding-right: 5px;
  background: #fff;
  color: #0c6cd8;
  font: bold 15px/24px "Noto Sans CJK SC", sans-serif;
}

.ime svg {
  width: 16px;
  height: 16px;
  fill: #0c6cd8;
}

.ime .ime-logo {
  width: 32px;
  height: 34px;
  margin: -6px 0 0 -16px;
}

.ime .mic {
  fill: #f27a44;
}

.taskbar {
  flex: none;
  display: flex;
  height: 40px;
  background: linear-gradient(90deg, #1a282c 45%, #34393f 60%, #3a4246);
  color: #fff;
  font: 14px/20px "Noto Sans", "Noto Sans CJK SC", sans-serif;
}

.start, .folder {
  width: 48px;
}

.start svg {
  display: block;
  width: 16px;
  height: 16px;
  margin-left: 16px;
}

.folder svg {
  display: block;
  width: 24px;
  height: 24px;
  margin-left: 14px;
}

.tasks {
  flex: 1;
  min-width: 0;
  display: flex;
  gap: 8px;
  padding-left: 7px;
}

.task {
  flex: 1;
  min-width: 0;
  max-width: 142px;
  display: flex;
  align-items: center;
  gap: 4px;
  padding-left: 7px;
  overflow: hidden;
  border-bottom: 2px solid #76b9ed;
  font-size: 12px;
}

.task svg {
  flex: none;
  width: 24px;
  height: 24px;
}

.task.current {
  background: #62676b;
}

.tray {
  display: flex;
  align-items: center;
  gap: 8px;
  width: 317px;
  padding-right: 15px;
}

.tray svg {
  flex: none;
  width: 16px;
  height: 16px;
}

.tray .sogou {
  margin-left: 5px;
}

.tray time {
  flex: 1;
  text-align: center;
  font-size: 12px;
}

.notify {
  position: relative;
  margin-left: 16px;
  width: 24px;
  height: 20px;
}

.notify b {
  position: absolute;
  right: 2px;
  top: 8px;
  width: 16px;
  height: 16px;
  border: 1px solid #ccc;
  border-radius: 50%;
  background: #3a4246;
  font: 12px/14px "Noto Sans", sans-serif;
  text-align: center;
}
</style>
